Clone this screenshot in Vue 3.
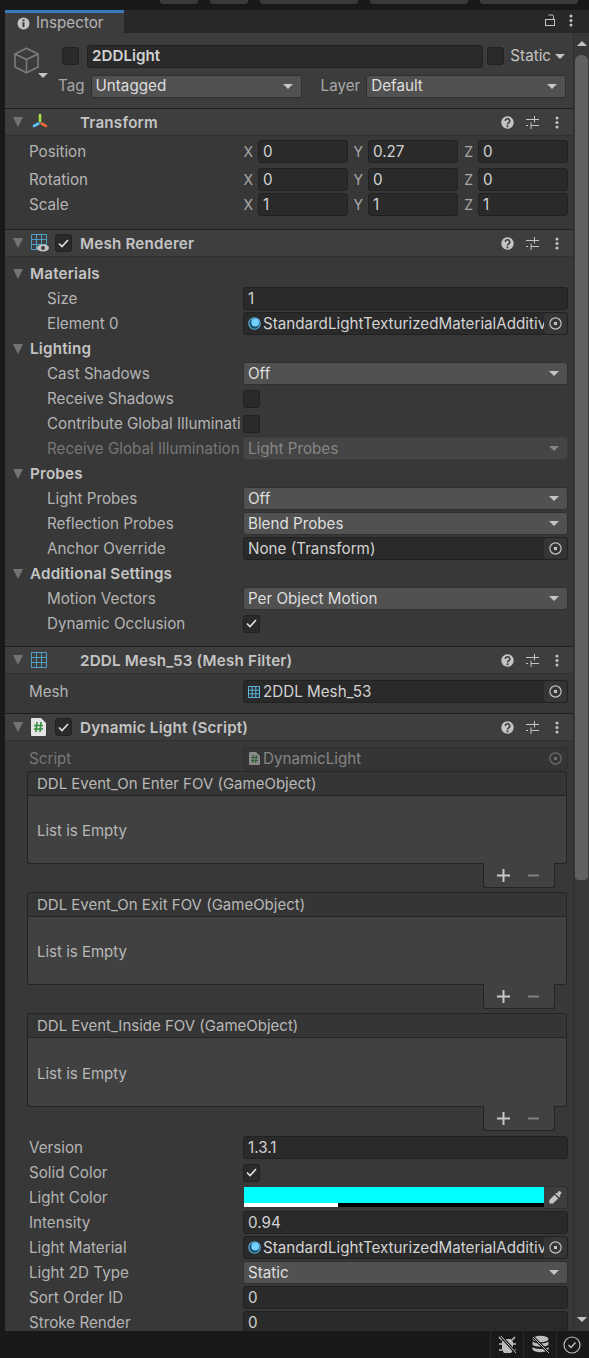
<script setup>
const mat = 'StandardLightTexturizedMaterialAdditive'

const sections = [
  {
    title: 'Transform', icon: 'transform',
    rows: [
      { kind: 'xyz', label: 'Position', v: ['0', '0.27', '0'] },
      { kind: 'xyz', label: 'Rotation', v: ['0', '0', '0'], gap: true },
      { kind: 'xyz', label: 'Scale', v: ['1', '1', '1'] }
    ],
    pad: [3, 12]
  },
  {
    title: 'Mesh Renderer', icon: 'renderer', toggle: true,
    rows: [
      { kind: 'fold', label: 'Materials' },
      { kind: 'text', label: 'Size', value: '1', sub: true },
      { kind: 'object', label: 'Element 0', value: mat, icon: 'material', sub: true },
      { kind: 'fold', label: 'Lighting' },
      { kind: 'select', label: 'Cast Shadows', value: 'Off', sub: true },
      { kind: 'check', label: 'Receive Shadows', sub: true },
      { kind: 'check', label: 'Contribute Global Illumination', sub: true },
      { kind: 'select', label: 'Receive Global Illumination', value: 'Light Probes', sub: true, off: true },
      { kind: 'fold', label: 'Probes' },
      { kind: 'select', label: 'Light Probes', value: 'Off', sub: true },
      { kind: 'select', label: 'Reflection Probes', value: 'Blend Probes', sub: true },
      { kind: 'object', label: 'Anchor Override', value: 'None (Transform)', sub: true },
      { kind: 'fold', label: 'Additional Settings' },
      { kind: 'select', label: 'Motion Vectors', value: 'Per Object Motion', sub: true },
      { kind: 'check', label: 'Dynamic Occlusion', on: true, sub: true }
    ],
    pad: [4, 10]
  },
  {
    title: '2DDL Mesh_53 (Mesh Filter)', icon: 'grid',
    rows: [{ kind: 'object', label: 'Mesh', value: '2DDL Mesh_53', icon: 'grid' }],
    pad: [5, 9]
  },
  {
    title: 'Dynamic Light (Script)', icon: 'script', toggle: true,
    rows: [
      { kind: 'object', label: 'Script', value: 'DynamicLight', icon: 'script', off: true },
      { kind: 'list', label: 'DDL Event_On Enter FOV (GameObject)' },
      { kind: 'list', label: 'DDL Event_On Exit FOV (GameObject)' },
      { kind: 'list', label: 'DDL Event_Inside FOV (GameObject)', tall: true },
      { kind: 'text', label: 'Version', value: '1.3.1' },
      { kind: 'check', label: 'Solid Color', on: true },
      { kind: 'color', label: 'Light Color' },
      { kind: 'text', label: 'Intensity', value: '0.94' },
      { kind: 'object', label: 'Light Material', value: mat, icon: 'material' },
      { kind: 'select', label: 'Light 2D Type', value: 'Static' },
      { kind: 'text', label: 'Sort Order ID', value: '0' },
      { kind: 'text', label: 'Stroke Render', value: '0' }
    ],
    pad: [5, 0]
  }
]
</script>

<template>
  <div class="window">
    <div class="top-strip">
      <span class="top-btn small"></span>
      <span class="top-btn small"></span>
      <span class="top-btn"></span>
      <span class="top-btn"></span>
      <span class="top-btn"></span>
    </div>

    <div class="panel">
      <div class="tabs">
        <div class="tab">
          <svg width="13" height="13" viewBox="0 0 13 13">
            <circle cx="6.5" cy="6.5" r="6" fill="#c4c4c4" />
            <rect x="5.5" y="5.2" width="2" height="5" fill="#3c3c3c" />
            <rect x="5.5" y="2.4" width="2" height="1.9" fill="#3c3c3c" />
          </svg>
          <span>Inspector</span>
        </div>
        <div class="tab-tools">
          <svg width="10" height="12" viewBox="0 0 10 12" fill="none" stroke="#c4c4c4" stroke-width="1">
            <rect x="0.5" y="5.5" width="9" height="6" />
            <path d="M8.5 5.5V2.5A1.5 1.5 0 0 0 7 1H3.5" />
          </svg>
          <svg width="4" height="13" viewBox="0 0 4 13" fill="#c4c4c4">
            <circle cx="2" cy="2" r="1.5" /><circle cx="2" cy="6.5" r="1.5" /><circle cx="2" cy="11" r="1.5" />
          </svg>
        </div>
      </div>

      <div class="body">
        <div class="content">
          <div class="obj">
            <div class="cube-col">
              <svg width="25" height="27" viewBox="0 0 25 27" fill="none" stroke="#7b7b7b" stroke-width="1.6">
                <path d="M12.5 1.2 24 7v13l-11.5 5.8L1 20V7Z" />
                <path d="M1 7l11.5 5.5L24 7M12.5 12.5v13.3" />
              </svg>
              <i class="tri cube-tri"></i>
            </div>
            <div class="obj-rows">
              <div class="obj-row">
                <span class="check obj-check"></span>
                <span class="field name">2DDLight</span>
                <span class="check"></span>
                <span class="static">Static</span>
                <i class="tri static-tri"></i>
              </div>
              <div class="obj-row second">
                <span class="obj-label">Tag</span>
                <span class="select tag"><span>Untagged</span><i class="tri"></i></span>
                <span class="obj-label layer">Layer</span>
                <span class="select layer-select"><span>Default</span><i class="tri"></i></span>
              </div>
            </div>
          </div>

          <section v-for="s in sections" :key="s.title" class="comp">
            <header class="comp-head">
              <i class="fold"></i>
              <span class="comp-icon">
                <svg v-if="s.icon === 'transform'" width="18" height="18" viewBox="0 0 18 18" fill="none" stroke-width="2.6" stroke-linecap="round">
                  <path d="M9 2v6" stroke="#a4e34a" />
                  <path d="M7.5 10.5 3 13" stroke="#5cc3f0" />
                  <path d="M10.5 10.5 15 13" stroke="#e8683a" />
                </svg>
                <svg v-else-if="s.icon === 'renderer'" width="18" height="18" viewBox="0 0 18 18" fill="none" stroke="#4f9fc4">
                  <path d="M.5.5h15v15H.5ZM5.5.5v15M10.5.5v15M.5 5.5h15M.5 10.5h15" />
                  <ellipse cx="12" cy="14" rx="6" ry="3.4" fill="#c4c4c4" stroke="none" />
                  <circle cx="12" cy="14" r="2" fill="#3c3c3c" stroke="none" />
                </svg>
                <svg v-else-if="s.icon === 'grid'" width="16" height="16" viewBox="0 0 16 16" fill="none" stroke="#4f9fc4">
                  <path d="M.5.5h15v15H.5ZM5.5.5v15M10.5.5v15M.5 5.5h15M.5 10.5h15" />
                </svg>
                <svg v-else width="15" height="18" viewBox="0 0 15 18">
                  <path d="M1 0h9l5 5v12a1 1 0 0 1-1 1H1a1 1 0 0 1-1-1V1a1 1 0 0 1 1-1Z" fill="#e4e4e4" />
                  <path d="M6 4 5 14M10 4 9 14M3 7.5h9M3 11h9" stroke="#2f8f3f" stroke-width="1.6" fill="none" />
                </svg>
              </span>
              <span v-if="s.toggle" class="check head-check on">
                <svg width="11" height="9" viewBox="0 0 11 9" fill="none" stroke="#e2e2e2" stroke-width="1.6"><path d="M1 4.5 4 7.5 10 1" /></svg>
              </span>
              <span class="comp-title" :class="{ shifted: !s.toggle }">{{ s.title }}</span>
              <span class="head-tools">
                <svg width="13" height="13" viewBox="0 0 13 13">
                  <circle cx="6.5" cy="6.5" r="6.2" fill="#c4c4c4" />
                  <path d="M4.3 5a2.2 2.2 0 1 1 3.3 1.9c-.8.5-1.1.8-1.1 1.6" fill="none" stroke="#3c3c3c" stroke-width="1.6" />
                  <rect x="5.6" y="9.4" width="1.8" height="1.8" fill="#3c3c3c" />
                </svg>
                <svg width="13" height="13" viewBox="0 0 13 13" fill="none" stroke="#c4c4c4" stroke-width="1">
                  <path d="M0 3.5h13M8.5 0v6.5M0 9.5h2M5 9.5h8M5 6.5v6.5" />
                </svg>
                <svg class="head-kebab" width="4" height="13" viewBox="0 0 4 13" fill="#c4c4c4">
                  <circle cx="2" cy="2" r="1.5" /><circle cx="2" cy="6.5" r="1.5" /><circle cx="2" cy="11" r="1.5" />
                </svg>
              </span>
            </header>

            <div class="comp-body" :style="{ paddingTop: s.pad[0] + 'px', paddingBottom: s.pad[1] + 'px' }">
              <template v-for="r in s.rows" :key="r.label">
                <div v-if="r.kind === 'list'" class="list">
                  <div class="list-head">{{ r.label }}</div>
                  <div class="list-body" :class="{ tall: r.tall }">List is Empty</div>
                  <div class="list-foot">
                    <svg width="13" height="13" viewBox="0 0 13 13" fill="#c8c8c8"><path d="M5.5 0h2v5.5H13v2H7.5V13h-2V7.5H0v-2h5.5Z" /></svg>
                    <svg width="11" height="13" viewBox="0 0 11 13" fill="#808080"><rect y="5.5" width="11" height="2" /></svg>
                  </div>
                </div>

                <div v-else-if="r.kind === 'fold'" class="row fold-row">
                  <i class="fold"></i><span>{{ r.label }}</span>
                </div>

                <div v-else class="row" :class="{ sub: r.sub, off: r.off, gap: r.gap }">
                  <span class="label">{{ r.label }}</span>

                  <div v-if="r.kind === 'xyz'" class="xyz">
                    <template v-for="(val, i) in r.v" :key="i">
                      <span class="axis">{{ 'XYZ'[i] }}</span>
                      <span class="field">{{ val }}</span>
                    </template>
                  </div>

                  <span v-else-if="r.kind === 'text'" class="field">{{ r.value }}</span>

                  <span v-else-if="r.kind === 'select'" class="select"><span>{{ r.value }}</span><i class="tri"></i></span>

                  <span v-else-if="r.kind === 'check'" class="check" :class="{ on: r.on }">
                    <svg v-if="r.on" width="11" height="9" viewBox="0 0 11 9" fill="none" stroke="#e2e2e2" stroke-width="1.6"><path d="M1 4.5 4 7.5 10 1" /></svg>
                  </span>

                  <span v-else-if="r.kind === 'object'" class="field object">
                    <svg v-if="r.icon === 'material'" class="obj-icon" width="13" height="13" viewBox="0 0 13 13">
                      <circle cx="6.5" cy="6.5" r="5.7" fill="#1d4e6a" stroke="#5cb4e0" stroke-width="1.1" />
                      <circle cx="7.2" cy="5.5" r="3.9" fill="#73d2ff" />
                    </svg>
                    <svg v-else-if="r.icon === 'grid'" class="obj-icon wide" width="12" height="12" viewBox="0 0 12 12" fill="none" stroke="#5bb4dd">
                      <path d="M.5.5h11v11H.5ZM4.2.5v11M7.8.5v11M.5 4.2h11M.5 7.8h11" />
                    </svg>
                    <svg v-else-if="r.icon === 'script'" class="obj-icon script" width="11" height="13" viewBox="0 0 11 13">
                      <path d="M1 0h6l4 4v8a1 1 0 0 1-1 1H1a1 1 0 0 1-1-1V1a1 1 0 0 1 1-1Z" fill="#8a8a8a" />
                      <path d="M4.4 3 3.6 11M7.4 3l-.8 8M2 5.5h7M2 8.5h7" stroke="#2f5f38" stroke-width="1.2" fill="none" />
                    </svg>
                    <span class="object-text">{{ r.value }}</span>
                    <span class="picker">
                      <svg width="13" height="13" viewBox="0 0 13 13" fill="none" stroke="currentColor" stroke-width="1.2">
                        <circle cx="6.5" cy="6.5" r="5.6" />
                        <rect x="5" y="5" width="3" height="3" fill="currentColor" stroke="none" />
                      </svg>
                    </span>
                  </span>

                  <span v-else-if="r.kind === 'color'" class="color">
                    <span class="swatch"><b></b></span>
                    <span class="dropper">
                      <svg width="13" height="13" viewBox="0 0 13 13" fill="#c4c4c4">
                        <path d="M9 0.8a1.9 1.9 0 0 1 3.2 1.9L10.4 4.6l.9.9-1.1 1.1L6.4 2.8l1.1-1.1.9.9Z" />
                        <path d="M5.6 3.8 9.2 7.4 4 12.6H.4V9Z" />
                      </svg>
                    </span>
                  </span>
                </div>
              </template>
            </div>
          </section>
        </div>

        <aside class="scrollbar">
          <i class="tri up"></i>
          <span class="thumb"></span>
          <i class="tri down"></i>
        </aside>
      </div>
    </div>

    <footer class="status">
      <span class="status-cell">
        <svg width="19" height="19" viewBox="0 0 19 19">
          <path d="M5 4h8l2 3v8l-2 3H6l-2-3V7Z" fill="#bdbdbd" />
          <path d="M1 2l3 3M1 9h3M1 15h3M17 2l-3 3M18 9h-3M18 15h-3" stroke="#bdbdbd" stroke-width="1.6" />
          <path d="M3 1 18 18" stroke="#191919" stroke-width="3" />
          <path d="M3 1 18 18" stroke="#bdbdbd" stroke-width="1" />
        </svg>
      </span>
      <span class="status-cell">
        <svg width="19" height="19" viewBox="0 0 19 19">
          <ellipse cx="9.5" cy="4" rx="8" ry="3.2" fill="#bdbdbd" />
          <path d="M1.5 6.5c2 2.6 14 2.6 16 0v3.2c-2 2.6-14 2.6-16 0ZM1.5 12c2 2.6 14 2.6 16 0v2.8c-2 3.2-14 3.2-16 0Z" fill="#bdbdbd" />
          <path d="M2 2 18 18" stroke="#191919" stroke-width="2.6" />
          <path d="M2 2 18 18" stroke="#bdbdbd" stroke-width="1" />
        </svg>
      </span>
      <span class="status-cell last">
        <svg width="18" height="18" viewBox="0 0 18 18" fill="none" stroke="#bdbdbd" stroke-width="1.2">
          <circle cx="9" cy="9" r="8" />
          <path d="M5.5 9 8 11.5 12.5 6.5" stroke-width="1.5" />
        </svg>
      </span>
    </footer>
  </div>
</template>

<style>
html,
body {
  margin: 0;
  background: #191919;
}
</style>

<style scoped>
.window {
  width: 589px;
  height: 1358px;
  display: flex;
  flex-direction: column;
  overflow: hidden;
  background: #191919;
  color: #c4c4c4;
  font-family: Inter, "Liberation Sans", sans-serif;
  font-size: 15.2px;
  line-height: 20px;
}

.top-strip {
  flex: 0 0 10px;
  display: flex;
  align-items: flex-start;
  padding-left: 160px;
  gap: 12px;
  box-sizing: border-box;
}

.top-btn {
  width: 98px;
  height: 4px;
  background: #3a3a3a;
  border-radius: 0 0 3px 3px;
}

.top-btn.small {
  width: 38px;
}

.panel {
  flex: 1;
  min-height: 0;
  margin-left: 5px;
  display: flex;
  flex-direction: column;
}

.tabs {
  flex: 0 0 23px;
  display: flex;
  justify-content: space-between;
  background: #282828;
}

.tab {
  width: 119px;
  box-sizing: border-box;
  border-top: 3px solid #3a79bb;
  background: #3c3c3c;
  border-radius: 0 0 3px 0;
  display: flex;
  align-items: center;
  gap: 6px;
  padding-left: 12px;
  color: #b4b4b4;
}

.tab-tools {
  display: flex;
  align-items: center;
  gap: 14px;
  padding: 0 16px 3px 0;
}

.body {
  flex: 1;
  min-height: 0;
  display: flex;
}

.content {
  flex: 1;
  min-width: 0;
  overflow: hidden;
  background: #383838;
}

.obj {
  height: 75px;
  box-sizing: border-box;
  background: #3c3c3c;
  display: flex;
  padding-top: 12px;
}

.cube-col {
  flex: 0 0 53px;
  position: relative;
  padding: 2px 0 0 9px;
  box-sizing: border-box;
}

.cube-tri {
  position: absolute;
  left: 33px;
  top: 28px;
}

.obj-rows {
  flex: 1;
  min-width: 0;
  padding-right: 7px;
}

.obj-row {
  display: flex;
  align-items: center;
  height: 22px;
}

.obj-row.second {
  margin-top: 8px;
}

.check {
  flex: none;
  box-sizing: border-box;
  width: 17px;
  height: 18px;
  display: inline-flex;
  align-items: center;
  justify-content: center;
  background: #2a2a2a;
  border: 1px solid #212121;
  border-radius: 3px;
}

.obj-check {
  margin: 0 8px 0 4px;
}

.name {
  flex: 1;
  font-weight: 600;
  margin-right: 4px;
}

.static {
  margin: 0 4px 0 6px;
}

.static-tri {
  margin-right: 1px;
}

.obj-label {
  flex: none;
  color: #a8a8a8;
  margin-right: 6px;
}

.tag {
  flex: 0 0 211px;
}

.layer {
  margin: 0 6px 0 19px;
}

.layer-select {
  flex: 1;
}

.comp {
  border-top: 1px solid #1f1f1f;
}

.comp-head {
  height: 27px;
  box-sizing: border-box;
  background: #3e3e3e;
  border-bottom: 1px solid #303030;
  display: flex;
  align-items: center;
  padding-left: 8px;
  font-weight: 600;
}

.comp-icon {
  flex: 0 0 22px;
  margin-left: 8px;
  display: flex;
  align-items: center;
}

.head-check {
  margin-left: 2px;
}

.comp-title {
  margin: 2px 0 0 8px;
  white-space: nowrap;
  letter-spacing: 0.2px;
}

.comp-title.shifted {
  margin-left: 27px;
}

.head-tools {
  margin-left: auto;
  display: flex;
  align-items: center;
  gap: 12px;
  padding-right: 14px;
}

.head-kebab {
  margin-left: 4px;
}

.fold {
  flex: none;
  width: 0;
  height: 0;
  border-left: 5px solid transparent;
  border-right: 5px solid transparent;
  border-top: 10px solid #737373;
}

.row {
  height: 25px;
  display: grid;
  grid-template-columns: 238px 1fr;
  align-items: center;
  padding-right: 5px;
}

.row.gap {
  margin-top: 3px;
}

.fold-row {
  display: flex;
  gap: 7px;
  padding-left: 8px;
  font-weight: 600;
  letter-spacing: 0.2px;
}

.label {
  margin-right: 2px;
  padding-left: 24px;
  white-space: nowrap;
  overflow: hidden;
  color: #b4b4b4;
}

.sub .label {
  padding-left: 42px;
}

.off .label {
  color: #777;
}

.field,
.select {
  box-sizing: border-box;
  height: 23px;
  display: flex;
  align-items: center;
  padding: 0 4px;
  border-radius: 3px;
  min-width: 0;
  white-space: nowrap;
}

.field {
  background: #2a2a2a;
  border: 1px solid #212121;
  color: #d2d2d2;
}

.select {
  background: #515151;
  border: 1px solid #303030;
  color: #dedede;
  justify-content: space-between;
  padding-right: 8px;
}

.off .select {
  background: #454545;
  border-color: #3c3c3c;
  color: #858585;
}

.off .select .tri {
  border-top-color: #858585;
}

.tri {
  display: inline-block;
  flex: none;
  width: 0;
  height: 0;
  border-left: 5px solid transparent;
  border-right: 5px solid transparent;
  border-top: 5px solid #c4c4c4;
}

.xyz {
  display: grid;
  grid-template-columns: 15px 90px 20px 90px 20px 90px;
  align-items: center;
}

.axis {
  text-align: right;
  padding-right: 5px;
  font-size: 14px;
  color: #a8a8a8;
  margin-left: -4px;
}

.object {
  padding: 0 0 0 4px;
  overflow: hidden;
}

.obj-icon {
  flex: none;
  margin-right: 2px;
}

.obj-icon.wide {
  margin-right: 3px;
}

.obj-icon.script {
  margin: 0 3px 0 1px;
}

.object-text {
  flex: 1;
  min-width: 0;
  overflow: hidden;
}

.picker {
  flex: none;
  width: 23px;
  height: 100%;
  display: flex;
  align-items: center;
  justify-content: center;
  background: #353535;
  color: #c4c4c4;
  border-radius: 3px;
}

.off .field {
  background: #353535;
  border-color: #2e2e2e;
  color: #858585;
}

.off .picker {
  color: #6e6e6e;
  background: none;
}

.list {
  margin: 0 6px 4px 22px;
  font-size: 15px;
  color: #b8b8b8;
}

.list-head {
  height: 25px;
  box-sizing: border-box;
  padding: 1px 0 0 9px;
  display: flex;
  align-items: center;
  background: #353535;
  border: 1px solid #242424;
  border-radius: 3px 3px 0 0;
}

.list-body {
  height: 68px;
  box-sizing: border-box;
  padding: 2px 0 0 9px;
  display: flex;
  align-items: center;
  background: #414141;
  border: 1px solid #242424;
  border-top: 0;
  border-radius: 0 0 3px 3px;
}

.list-body.tall {
  height: 69px;
  padding-top: 3px;
}

.list-foot {
  width: 72px;
  height: 25px;
  box-sizing: border-box;
  margin: -1px 12px 0 auto;
  position: relative;
  background: #414141;
  border: 1px solid #242424;
  border-top: 0;
  border-radius: 0 0 3px 3px;
  display: flex;
  align-items: center;
  gap: 18px;
  padding-left: 13px;
}

.color {
  height: 23px;
  display: flex;
  padding-left: 1px;
}

.swatch {
  flex: 1;
  margin-top: 1px;
  height: 20px;
  box-sizing: border-box;
  background: #000;
  position: relative;
  border-top: 16px solid #00ffff;
}

.swatch b {
  display: block;
  width: 94px;
  height: 4px;
  background: #fff;
}

.dropper {
  flex: 0 0 24px;
  background: #3e3e3e;
  border: 1px solid #2f2f2f;
  border-left: 0;
  border-radius: 0 3px 3px 0;
  box-sizing: border-box;
  display: flex;
  align-items: center;
  justify-content: center;
}

.scrollbar {
  flex: 0 0 16px;
  position: relative;
  box-sizing: border-box;
  background: #383838;
  border-left: 1px solid #303030;
}

.thumb {
  position: absolute;
  left: 1px;
  top: 22px;
  width: 13px;
  height: 825px;
  background: #616161;
  border-radius: 6px 6px 4px 4px;
}

.scrollbar .up,
.scrollbar .down {
  position: absolute;
  left: 3px;
}

.scrollbar .up {
  top: 8px;
  border-top: 0;
  border-bottom: 5px solid #c4c4c4;
}

.scrollbar .down {
  top: calc(100% - 14px);
}

.status {
  flex: 0 0 27px;
  display: flex;
  justify-content: flex-end;
  background: #191919;
}

.status-cell {
  width: 33px;
  display: flex;
  align-items: center;
  justify-content: center;
  border-left: 1px solid #2a2a2a;
  box-sizing: border-box;
}

.status-cell.last {
  padding-right: 3px;
}
</style>
